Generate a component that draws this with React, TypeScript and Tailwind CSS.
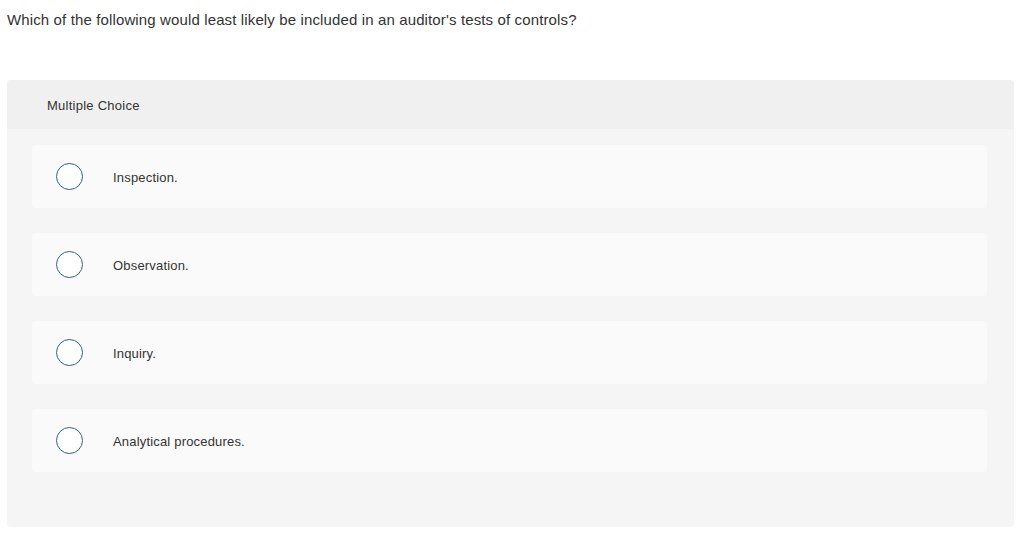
import React from "react";

const options = [
  "Inspection.",
  "Observation.",
  "Inquiry.",
  "Analytical procedures.",
];

function Option({ label }: { label: string }) {
  return (
    <label className="flex items-center h-[63px] rounded bg-[#fafafa] pl-6 cursor-pointer">
      <span className="block w-[27px] h-[27px] rounded-full border-[1.5px] border-[#2d5f9a] bg-white shrink-0" />
      <span className="ml-[30px] text-[13px] leading-[16px] pt-[2px] tracking-[0.18px] text-[#333]">
        {label}
      </span>
    </label>
  );
}

export default function App() {
  return (
    <div
      className="w-[1024px] h-[548px] bg-white px-[7px] pt-[10px]"
      style={{ fontFamily: "'Liberation Sans', Arial, sans-serif" }}
    >
      <p className="text-[15px] leading-[20px] tracking-[0.13px] text-[#333]">
        Which of the following would least likely be included in an auditor's tests of controls?
      </p>

      <div className="mt-[50px] w-[1007px] h-[447px] rounded bg-[#f5f5f5]">
        <div className="h-[49px] flex items-center pl-10 pt-[2px] rounded-t bg-[#f0f0f0] text-[13px] tracking-[0.25px] text-[#333]">
          Multiple Choice
        </div>
        <div className="flex flex-col gap-[25px] pt-4 pl-[25px] pr-[27px]">
          {options.map((o) => (
            <Option key={o} label={o} />
          ))}
        </div>
      </div>
    </div>
  );
}
